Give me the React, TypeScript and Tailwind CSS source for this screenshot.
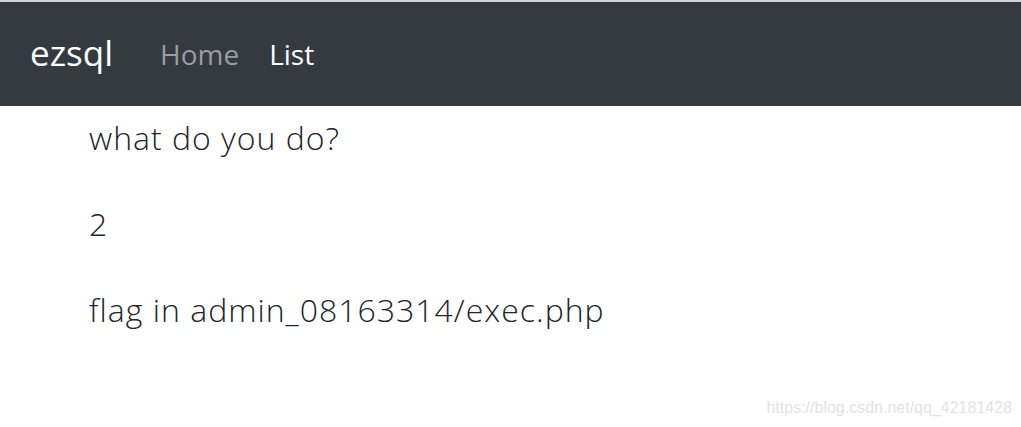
export default function App() {
  return (
    <div className="relative w-[1021px] h-[427px] bg-white overflow-hidden" style={{ fontFamily: '"Open Sans", sans-serif' }}>
      <div className="h-[2px] bg-[#d4d4d4]"></div>
      <nav className="h-[104px] bg-[#343a40] flex items-center pl-[30px]">
        <a className="text-white text-[35px] leading-none mr-[47px] pb-[4px]">ezsql</a>
        <ul className="flex items-center gap-[30px] text-[28px] leading-none">
          <li className="text-[#9a9da0]">Home</li>
          <li className="text-white">List</li>
        </ul>
      </nav>
      <main className="pl-[89px] pt-[8px] text-[#212529] font-light text-[32px] leading-[48px] tracking-[1px]">
        <p className="mb-[38px]">what do you do?</p>
        <p className="mb-[38px]">2</p>
        <p>flag in admin_08163314/exec.php</p>
      </main>
      <div className="absolute right-[9px] bottom-[7px] text-[16px] text-[#e3e3e3]" style={{ fontFamily: '"Liberation Sans", sans-serif' }}>
        https://blog.csdn.net/qq_42181428
      </div>
    </div>
  );
}
